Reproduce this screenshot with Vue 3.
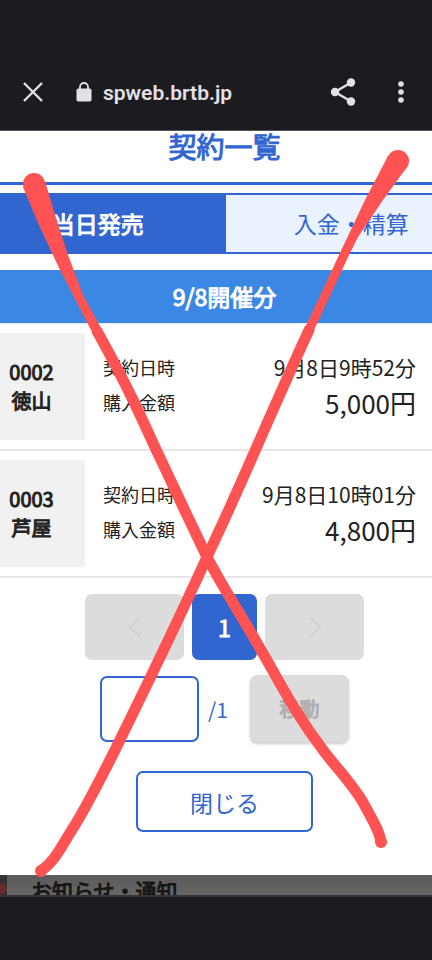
<script setup>
import { ref } from "vue";

const tabs = [
  { id: "sale", label: "当日発売" },
  { id: "payment", label: "入金・精算" },
];
const activeTab = ref("sale");

const contracts = [
  { no: "0002", place: "徳山", date: "9月8日9時52分", amount: "5,000円" },
  { no: "0003", place: "芦屋", date: "9月8日10時01分", amount: "4,800円" },
];

const page = ref("");
const totalPages = 1;
</script>

<template>
  <div class="screen">
    <header class="browser-bar">
      <button type="button" class="icon-btn" aria-label="閉じる">
        <svg width="20" height="20" viewBox="0 0 20 20" fill="none" stroke="#e3e0e6" stroke-width="2.4">
          <path d="M1 1l18 18M19 1L1 19" />
        </svg>
      </button>
      <div class="address">
        <svg width="16" height="20" viewBox="0 0 16 20">
          <path d="M4 9V5a4 4 0 0 1 8 0V9" fill="none" stroke="#e3e0e6" stroke-width="1.8" />
          <rect x="0.5" y="6.5" width="15" height="13" rx="1.8" fill="#e3e0e6" />
        </svg>
        <span class="url">spweb.brtb.jp</span>
      </div>
      <button type="button" class="icon-btn" aria-label="共有">
        <svg width="26" height="28" viewBox="0 0 26 28" fill="#e3e0e6">
          <path d="M21 4.5L5 14l16 9.5" fill="none" stroke="#e3e0e6" stroke-width="2.4" />
          <circle cx="21" cy="4.5" r="4.2" />
          <circle cx="5" cy="14" r="4.2" />
          <circle cx="21" cy="23.5" r="4.2" />
        </svg>
      </button>
      <button type="button" class="icon-btn" aria-label="メニュー">
        <svg width="6" height="22" viewBox="0 0 6 22" fill="#e3e0e6">
          <circle cx="3" cy="3" r="2.8" />
          <circle cx="3" cy="11" r="2.8" />
          <circle cx="3" cy="19" r="2.8" />
        </svg>
      </button>
    </header>

    <main class="sheet">
      <div class="wide">
        <h1>契約一覧</h1>
        <div class="tabs" role="tablist">
          <button
            v-for="tab in tabs"
            :key="tab.id"
            type="button"
            role="tab"
            :aria-selected="activeTab === tab.id"
            :class="['tab', { active: activeTab === tab.id }]"
            @click="activeTab = tab.id"
          >
            {{ tab.label }}
          </button>
        </div>
        <h2>9/8開催分</h2>

        <ul class="contracts">
          <li v-for="item in contracts" :key="item.no" class="contract">
            <div class="place">
              <span>{{ item.no }}</span>
              <span>{{ item.place }}</span>
            </div>
            <dl class="details">
              <div class="line">
                <dt>契約日時</dt>
                <dd>{{ item.date }}</dd>
              </div>
              <div class="line">
                <dt>購入金額</dt>
                <dd class="amount">{{ item.amount }}</dd>
              </div>
            </dl>
          </li>
        </ul>

        <nav class="pager">
          <button type="button" class="page-btn" disabled aria-label="前へ">
            <svg width="14" height="24" viewBox="0 0 14 24"><path d="M12.5 2L2 12l10.5 10" /></svg>
          </button>
          <button type="button" class="page-btn current">1</button>
          <button type="button" class="page-btn" disabled aria-label="次へ">
            <svg width="14" height="24" viewBox="0 0 14 24"><path d="M1.5 2L12 12L1.5 22" /></svg>
          </button>
        </nav>

        <form class="jump" @submit.prevent>
          <input v-model="page" type="text" inputmode="numeric" aria-label="ページ" />
          <span class="total">/{{ totalPages }}</span>
          <button type="submit" class="move" disabled>移動</button>
        </form>

        <button type="button" class="close">閉じる</button>
      </div>
    </main>

    <section class="behind">
      <div class="thumb"></div>
      <p>お知らせ・通知</p>
    </section>

    <footer class="system-bar"></footer>

    <!-- 手書きのバツ印 -->
    <svg class="marker" viewBox="0 0 432 960" preserveAspectRatio="none" aria-hidden="true">
      <circle cx="34" cy="184" r="11" />
      <path d="M23 187L38 223L59 268L91 330L102 330L83 295L68 255L55 215L45 181Z" />
      <path
        class="stroke"
        d="M97 331C108 351 118 369 133 400C146 427 150 437 161 460C178 496 190 522 207 557C223 588 243 618 261 650C278 679 294 712 323 750C336 768 354 785 365 806C374 823 380 832 381 842"
      />
      <circle cx="381" cy="842" r="6" />
      <circle cx="398" cy="161" r="11" />
      <path d="M388 156L365 200L339 255L304 330L314 330L349 255L358 237L383 200L407 167Z" />
      <path
        class="stroke"
        d="M309 330C290 371 272 412 251 460C237 492 222 525 207 557C178 621 146 687 115 750C102 776 89 802 75 825C59 850 55 861 41 871"
      />
      <circle cx="41" cy="871" r="6" />
    </svg>
  </div>
</template>

<style>
body {
  margin: 0;
  background: #1c1b20;
}
</style>

<style scoped>
.screen {
  position: relative;
  display: flex;
  flex-direction: column;
  min-height: 100vh;
  overflow: hidden;
  background: #1c1b20;
  color: #222;
  font-family: "Noto Sans CJK JP", sans-serif;
}

button,
input {
  box-sizing: border-box;
  margin: 0;
  padding: 0;
  border: 0;
  font: inherit;
}

.browser-bar {
  display: flex;
  align-items: center;
  padding: 54px 20px 0 12px;
  height: 76px;
  border-bottom: 1px solid #55535a;
}

.icon-btn {
  display: flex;
  justify-content: center;
  width: 42px;
  background: none;
}

.icon-btn:last-child {
  width: 22px;
  margin-left: 26px;
}

.address {
  flex: 1;
  display: flex;
  align-items: center;
  gap: 11px;
  margin-left: 22px;
}

.url {
  padding-top: 2px;
  color: #e3e0e6;
  font-family: Roboto, sans-serif;
  font-size: 21px;
  font-weight: 600;
  line-height: 24px;
}

.sheet {
  overflow: hidden;
  background: #fff;
}

/* 画面より広いページを中央基準ではみ出させる */
.wide {
  margin: 0 -47px 0 -30px;
  padding-bottom: 43px;
}

/* 標準ウェイトの字幅のまま太らせる */
h1,
h2,
.tab.active,
.place,
.page-btn.current,
.move,
.behind p {
  font-weight: 400;
  -webkit-text-stroke: 1px currentColor;
}

h1 {
  margin: 0;
  padding: 0 0 20px;
  border-bottom: 3px solid #3166d1;
  color: #3166d1;
  font-size: 28px;
  line-height: 31px;
  text-align: center;
}

.tabs {
  display: flex;
  margin: 8px 0 16px;
  border: 2px solid #3166d1;
}

.tab {
  flex: 1;
  height: 57px;
  padding-bottom: 2px;
  background: #ebf2ff;
  color: #3166d1;
  font-size: 23px;
}

.tab + .tab {
  border-left: 2px solid #3166d1;
}

.tab.active {
  background: #3166d1;
  color: #fff;
}

h2 {
  margin: 0;
  background: #3a88e3;
  color: #fff;
  font-size: 23px;
  line-height: 53px;
  text-align: center;
}

.contracts {
  margin: 0;
  padding: 0;
  border-top: 1px solid #e6e6e6;
  list-style: none;
}

.contract {
  display: flex;
  align-items: center;
  padding: 9px 63px 9px 8px;
  border-bottom: 2px solid #e6e6e6;
}

.place {
  box-sizing: border-box;
  display: flex;
  flex-direction: column;
  justify-content: center;
  width: 107px;
  height: 107px;
  padding-bottom: 2px;
  background: #f1f1f1;
  font-size: 20px;
  line-height: 29px;
  text-align: center;
}

.details {
  flex: 1;
  margin: 0 0 0 18px;
  padding-bottom: 4px;
}

.line {
  display: flex;
  align-items: center;
  justify-content: space-between;
  height: 35px;
}

dt {
  font-size: 18px;
}

dd {
  margin: 0;
  font-size: 21px;
}

.amount {
  font-size: 26px;
}

.pager {
  display: flex;
  justify-content: center;
  gap: 8px;
  margin-top: 16px;
}

.page-btn {
  display: flex;
  align-items: center;
  justify-content: center;
  width: 99px;
  height: 66px;
  border-radius: 7px;
  background: #dcdcdc;
}

.page-btn path {
  fill: none;
  stroke: #d2d2d2;
  stroke-width: 2;
}

.page-btn.current {
  width: 65px;
  background: #3166d1;
  color: #fff;
  font-size: 23px;
}

.jump {
  display: flex;
  align-items: center;
  justify-content: center;
  margin-top: 15px;
}

.jump input {
  width: 99px;
  height: 66px;
  border: 2px solid #3166d1;
  border-radius: 7px;
  background: #fff;
  color: #222;
  font-size: 21px;
  text-align: center;
}

.total {
  box-sizing: border-box;
  width: 51px;
  padding-left: 9px;
  color: #3166d1;
  font-size: 21px;
}

.move {
  width: 99px;
  height: 67px;
  border-radius: 7px;
  background: #dcdcdc;
  box-shadow: 0 2px 3px rgba(0, 0, 0, 0.2);
  color: #b0b0b0;
  font-size: 20px;
}

.close {
  display: block;
  width: 177px;
  height: 61px;
  margin: 29px auto 0;
  border: 2px solid #3166d1;
  border-radius: 7px;
  background: #fff;
  color: #3166d1;
  font-size: 23px;
}

.behind {
  display: flex;
  height: 20px;
  overflow: hidden;
  background: linear-gradient(#5a5a5a, #666);
}

.thumb {
  width: 7px;
  background: radial-gradient(circle at 1px 14px, #6b2a2a 5px, #333 6px);
}

.behind p {
  margin: 0 0 0 24px;
  color: #161616;
  font-size: 21px;
  line-height: 30px;
}

.system-bar {
  flex: 1;
  min-height: 48px;
  border-top: 2px solid #34333b;
}

.marker {
  position: absolute;
  inset: 0;
  width: 100%;
  height: 100%;
  fill: #ff5252;
  pointer-events: none;
}

.marker .stroke {
  fill: none;
  stroke: #ff5252;
  stroke-width: 11;
  stroke-linecap: round;
  stroke-linejoin: round;
}
</style>
